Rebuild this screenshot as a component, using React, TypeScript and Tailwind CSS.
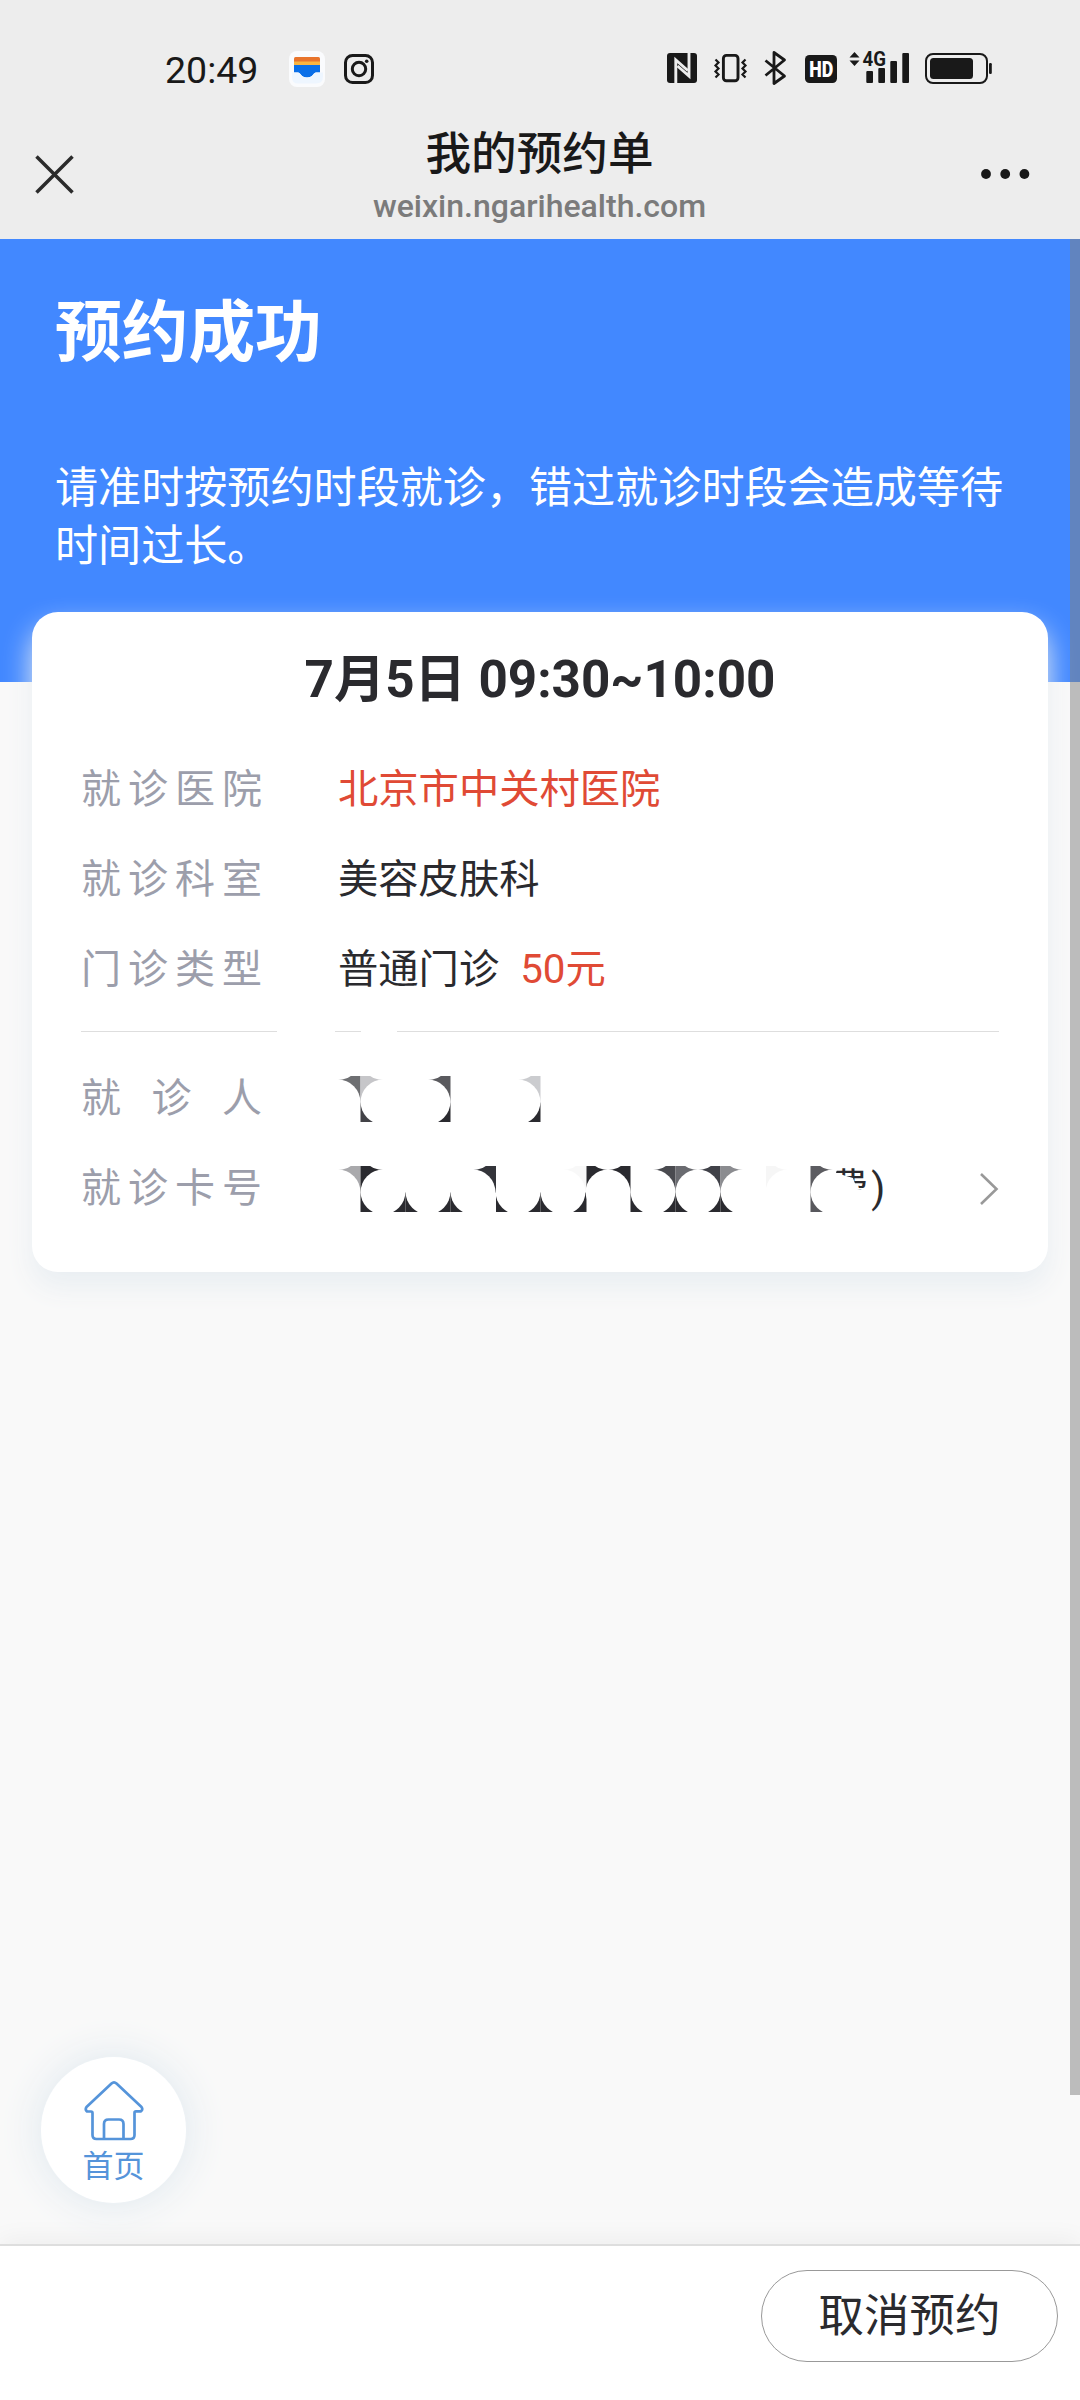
import type { ReactNode } from 'react';

const ink = '#2a2a2f';

// Each entry is a grid corner where up to four quarter tiles meet.
type Corner = {
  x: number;
  tl?: string;
  tr?: string;
  bl?: string;
  br?: string;
};

const nameCorners: Corner[] = [
  { x: 22.5, tl: '#6e6f72', tr: '#c6c6c9', br: '#424247' },
  { x: 112.5, tl: '#5a5a5e', bl: ink },
  { x: 202.5, tl: '#cbcccf', bl: ink },
];

const cardCorners: Corner[] = [
  { x: 22.5, tl: '#a9a9ac', tr: ink, br: ink },
  { x: 67.5, bl: ink, br: ink },
  { x: 112.5, bl: ink, br: ink },
  { x: 158, tl: '#33343a', br: ink },
  { x: 202.5, bl: ink, br: ink },
  { x: 248.5, tl: '#f8f8f8', tr: ink, bl: ink },
  { x: 292.5, tl: ink, br: ink },
  { x: 337.5, tl: '#4a4b50', tr: '#6a6b70', bl: ink, br: ink },
  { x: 382.5, tl: '#404148', tr: '#8b8c90', bl: ink, br: ink },
  { x: 428, tr: '#f6f6f6' },
  { x: 472.5, tr: '#5c5c61', br: '#58585d' },
];

function Mosaic({ corners, columns }: { corners: Corner[]; columns: number }) {
  const centers = Array.from({ length: columns }, (_, i) => i * 45);
  const width = (columns - 1) * 45;
  return (
    <svg width={width} height="46" viewBox={`0 0 ${width} 46`} className="block shrink-0">
      {corners.map((c) => (
        <g key={c.x}>
          {c.tl && <rect x={c.x - 22.5} y="0" width="22.5" height="26.5" fill={c.tl} />}
          {c.tr && <rect x={c.x} y="0" width="22.5" height="26.5" fill={c.tr} />}
          {c.bl && <rect x={c.x - 22.5} y="26.5" width="22.5" height="19.5" fill={c.bl} />}
          {c.br && <rect x={c.x} y="26.5" width="22.5" height="19.5" fill={c.br} />}
        </g>
      ))}
      {centers.map((x) => (
        <g key={x} fill="#fff">
          <circle cx={x} cy="-18.5" r="22.5" />
          <circle cx={x} cy="26" r="22.400" />
        </g>
      ))}
    </svg>
  );
}

function StatusBar() {
  return (
    <div className="flex h-[122px] items-start pt-[50px] pl-[165px]">
      <span className="mt-px w-[124px] text-[37.500px] leading-[38px] text-[#191919]">20:49</span>
      <svg width="36" height="36" viewBox="0 0 36 36" className="mt-[1px]">
        <rect width="36" height="36" rx="8" fill="#fafbfd" />
        <path d="M5 7.500q0-1.500 1.500-1.500h23q1.500 0 1.500 1.500V11H5z" fill="#e8742c" />
        <path d="M5 10.500h26V14H5z" fill="#fbb540" />
        <path d="M5 14h26v7.500h-4c-2.500 0-3 5-9 5s-6.500-5-9-5H5z" fill="#0a6fe8" />
        <path d="M3 21.500h6c2.500 0 3 5 9 5s6.500-5 9-5h7v4q0 7-7 7H9q-6 0-6-6z" fill="#eef6ff" />
      </svg>
      <svg width="30" height="30" viewBox="0 0 30 30" className="mt-1 ml-[19px]" fill="none" stroke="#191919" strokeWidth="3">
        <rect x="1.500" y="1.500" width="27" height="27" rx="7" />
        <circle cx="15" cy="15" r="6.700" />
        <circle cx="22.700" cy="7.300" r="1.800" fill="#191919" stroke="none" />
      </svg>
      <svg width="330" height="56" viewBox="665 40 330 56" className="-mt-[10px] ml-[291px]" fill="#191919">
        {/* nfc */}
        <rect x="667" y="53" width="30" height="30" rx="3" />
        <g fill="none" stroke="#ededed" strokeWidth="2.900">
          <path d="M675.800 83.500V60l12 10.500" />
          <path d="M689 52.500v23.500L677.500 66" />
        </g>
        {/* vibrate */}
        <rect x="723.400" y="55.400" width="14.600" height="25.400" rx="3" fill="none" stroke="#191919" strokeWidth="2.900" />
        <path
          d="M715.500 59.500l3 3-3 3 3 3-3 3 3 3-3 3M745.500 59.500l-3 3 3 3-3 3 3 3-3 3 3 3"
          fill="none"
          stroke="#191919"
          strokeWidth="2.200"
        />
        {/* bluetooth */}
        <path
          d="M765.500 60.500l19 15.500-10.500 7.500V52.500L784.500 60l-19 15.500"
          fill="none"
          stroke="#191919"
          strokeWidth="2.800"
          strokeLinejoin="round"
        />
        {/* hd */}
        <rect x="805" y="55" width="32" height="28" rx="4.500" />
        <text x="821.200" y="77" fontSize="22" fontWeight="900" fill="#fff" textAnchor="middle" textLength="24" lengthAdjust="spacingAndGlyphs">
          HD
        </text>
        {/* signal */}
        <path d="M849.500 57.500l5-5.500 5 5.500zM849.500 60.500l5 5.500 5-5.500z" />
        <text x="862.500" y="66" fontSize="20" fontWeight="700" textLength="23.500" lengthAdjust="spacingAndGlyphs">
          4G
        </text>
        <rect x="866.300" y="71" width="6.700" height="12" rx="1" />
        <rect x="878.300" y="68" width="6.700" height="15" rx="1" />
        <rect x="890.300" y="61" width="6.700" height="22" rx="1" />
        <rect x="902.300" y="53" width="6.700" height="30" rx="1" />
        {/* battery */}
        <rect x="926" y="54" width="61" height="29" rx="7" fill="none" stroke="#191919" strokeWidth="2" />
        <rect x="930" y="58" width="43" height="21" rx="3.500" />
        <rect x="989" y="63" width="2.800" height="11" rx="1.200" />
      </svg>
    </div>
  );
}

function TitleBar() {
  return (
    <div className="flex h-[117px] items-start justify-between pr-[50px] pl-[35px]">
      <svg width="39" height="39" viewBox="0 0 39 39" className="mt-[33px]" stroke="#2b2b2b" strokeWidth="3.500">
        <path d="M1.500 1.500l36 36M37.500 1.500l-36 36" />
      </svg>
      <div className="flex flex-col items-center pl-[25px] text-center">
        <h1 className="pt-[3px] text-[45.600px] leading-[60px] font-medium text-[#191919]">我的预约单</h1>
        <p className="mt-[2px] text-[32px] leading-[38px] font-medium text-[#7b7b7b]">weixin.ngarihealth.com</p>
      </div>
      <svg width="50" height="12" viewBox="0 0 50 12" className="mt-[46px]" fill="#191919">
        <circle cx="6" cy="6" r="4.900" />
        <circle cx="25.200" cy="6" r="4.900" />
        <circle cx="44.400" cy="6" r="4.900" />
      </svg>
    </div>
  );
}

function Row({ label, children }: { label: string; children: ReactNode }) {
  return (
    <div className="flex h-[90px] items-center">
      <span className="w-[181px] text-[40px] text-[#9c9eab] [text-align-last:justify]">{label}</span>
      <div className="ml-[76px] flex flex-1 items-center text-[40.300px] whitespace-nowrap text-[#2a2a2e]">{children}</div>
    </div>
  );
}

function AppointmentCard() {
  return (
    <section className="relative mx-8 -mt-[70px] h-[660px] rounded-[26px] bg-white px-[49px] shadow-[0_15px_28px_#e9eef2]">
      <h3 className="pt-[34px] text-center text-[51.200px] leading-[68px] font-bold text-[#2a2a2e]">7月5日 09:30~10:00</h3>
      <div className="pt-[31px]">
        <Row label="就诊医院">
          <span className="text-[#e04a35]">北京市中关村医院</span>
        </Row>
        <Row label="就诊科室">美容皮肤科</Row>
        <Row label="门诊类型">
          普通门诊<span className="ml-[21px] text-[#e04a35]">50元</span>
        </Row>
      </div>
      <div className="mt-[16px] flex h-px">
        <div className="w-[196px] bg-[#dedede]" />
        <div className="ml-[58px] w-[26px] bg-[#dedede]" />
        <div className="ml-[36px] flex-1 bg-[#dedede]" />
      </div>
      <div className="pt-[22px]">
        <Row label="就 诊 人">
          <Mosaic corners={nameCorners} columns={6} />
        </Row>
        <Row label="就诊卡号">
          <Mosaic corners={cardCorners} columns={12} />
          <span className="-ml-[5px] leading-[46px] [clip-path:polygon(10px_0,40px_0,40px_24px,29px_23px,25px_12px,8px_7px)]">费</span>
          <span className="ml-[3px]">)</span>
          <svg width="20" height="34" viewBox="0 0 20 34" className="ml-auto" fill="none" stroke="#999" strokeWidth="2.600">
            <path d="M2 2l15.500 15L2 32" />
          </svg>
        </Row>
      </div>
    </section>
  );
}

function HomeButton() {
  return (
    <button className="absolute top-[2057px] left-[41px] flex h-[146px] w-[145px] flex-col items-center rounded-full bg-white text-[#5594da] shadow-[0_0_44px_#dde7ee]">
      <svg width="62" height="62" viewBox="0 0 62 62" className="mt-[22px]" fill="none" stroke="currentColor" strokeWidth="2.700" strokeLinejoin="round">
        <path d="M28.500 4.500q2.500-2.300 5 0L58.500 28q1.700 2.300-.5 4.300h-5q-1.500 0-1.500 1.500V56q0 4-4 4h-34q-4 0-4-4V34q0-1.500-1.500-1.500h-4q-2.200-2-.5-4.500z" />
        <path d="M21 60V45q0-4.500 4.500-4.500h10.500q4.500 0 4.500 4.500v15" />
      </svg>
      <span className="mt-[4px] text-[31px] leading-[44px]">首页</span>
    </button>
  );
}

function App() {
  return (
    <div className="relative flex h-[2400px] w-[1080px] flex-col overflow-hidden bg-[#f9f9f9] font-['Roboto','Noto_Sans_CJK_SC',sans-serif]">
      <header className="h-[239px] shrink-0 bg-[#ededed]">
        <StatusBar />
        <TitleBar />
      </header>
      <main className="flex-1">
        <div className="h-[443px] bg-[#4288ff] pt-[50px] pl-[55px] text-white">
          <h2 className="text-[66.700px] leading-[88px] font-bold">预约成功</h2>
          <p className="mt-[83px] w-[960px] text-[43.100px] leading-[58px]">
            请准时按预约时段就诊，错过就诊时段会造成等待时间过长。
          </p>
        </div>
        <AppointmentCard />
      </main>
      <footer className="relative flex h-[156px] shrink-0 justify-end border-t-2 border-[#dedede] bg-white pt-[24px] pr-[22px] shadow-[0_-4px_24px_#0000000d]">
        <button className="h-[92px] w-[297px] rounded-full border border-[#999] pt-[2px] text-[45.500px] text-[#2a2a2e]">取消预约</button>
      </footer>
      <HomeButton />
      <div className="absolute top-[239px] right-0 h-[1856px] w-[10px] bg-[#808080]/50" />
    </div>
  );
}

export default App;
